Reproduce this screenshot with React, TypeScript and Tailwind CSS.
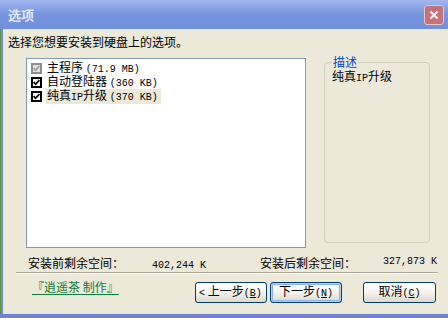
import React from "react";

const CJK = "[font-family:'Noto_Sans_CJK_SC',sans-serif]";

function M({ children }: { children: React.ReactNode }) {
  return <span className="[font-family:'Liberation_Mono',monospace] text-[10px] leading-[12px]">{children}</span>;
}

function Box({ gray }: { gray?: boolean }) {
  return (
    <span
      className={
        gray
          ? "flex h-[11px] w-[11px] items-center justify-center border-2 border-[#8e8e8e] bg-[#e4e4e4]"
          : "flex h-[11px] w-[11px] items-center justify-center border-2 border-black bg-white"
      }
    >
      <svg width="7" height="7" viewBox="0 0 7 7">
        <path d="M0.6 3.2 L2.6 5.3 L6.4 1.2" fill="none" stroke={gray ? "#9a9a9a" : "#000"} strokeWidth="1.7" />
      </svg>
    </span>
  );
}

function Row({ name, size, gray, sel }: { name: React.ReactNode; size: string; gray?: boolean; sel?: boolean }) {
  return (
    <div className="flex h-[14px] items-center">
      <Box gray={gray} />
      <span className={sel ? "ml-[4px] bg-[#ebe8d8] pr-[3px] pl-[1px] leading-[12px]" : "ml-[4px] pl-[1px] leading-[12px]"}>
        {name} <M>({size})</M>
      </span>
    </div>
  );
}

function Btn({ children, main, w }: { children: React.ReactNode; main?: boolean; w: string }) {
  return (
    <div
      className={`flex h-[21px] ${w} items-center justify-center rounded-[3px] border border-[#003c74] bg-gradient-to-b from-white via-[#f4f3ee] to-[#dcd9cc] text-[12px] leading-[12px] text-black ${
        main ? "shadow-[inset_0_0_0_1px_#b8d3f9,inset_0_0_0_2px_#8cb0ea]" : ""
      }`}
    >
      {children}
    </div>
  );
}

export default function App() {
  return (
    <div className={`h-[318px] w-[448px] overflow-hidden bg-[#ece9d8] text-[12px] text-black ${CJK}`}>
      {/* title bar */}
      <div className="flex h-[29px] items-center justify-between bg-gradient-to-b from-[#a2b7ee] via-[#7693de] to-[#7190dc] pl-[8px] pr-[4px]">
        <span className="text-[13px] font-bold leading-[13px] text-[#dfe7f8]">选项</span>
        <div className="flex h-[20px] w-[20px] items-center justify-center rounded-[3px] border border-[#e6c4c8] bg-[#c4737c]">
          <svg width="10" height="10" viewBox="0 0 10 10">
            <path d="M1.5 1.5 L8.5 8.5 M8.5 1.5 L1.5 8.5" stroke="#f4eeee" strokeWidth="2" />
          </svg>
        </div>
      </div>

      <div className="flex h-[285px]">
        <div className="w-px bg-[#5e9443]" />
        <div className="w-[2px] bg-[#7288d8]" />
        <div className="flex flex-1 flex-col">
          <div className="h-[25px] pl-[5px] pt-[7px] leading-[12px]">选择您想要安装到硬盘上的选项。</div>

          <div className="flex h-[194px]">
            <div className="ml-[23px] mt-[4px] h-[190px] w-[280px] border border-[#7f9db9] bg-white pl-[4px] pt-[2px]">
              <Row name="主程序" size="71.9 MB" gray />
              <Row name="自动登陆器" size="360 KB" />
              <Row
                name={
                  <>
                    纯真<M>IP</M>升级
                  </>
                }
                size="370 KB"
                sel
              />
            </div>
            <div className="relative ml-[18px] mt-[8px] h-[181px] w-[106px] rounded-[4px] border border-[#d0d0bf] pl-[7px] pt-[4px]">
              <span className="absolute left-[7px] top-[-7px] bg-[#ece9d8] px-[1px] leading-[12px] text-[#0046d5]">描述</span>
              <span className="leading-[12px]">
                纯真<M>IP</M>升级
              </span>
            </div>
          </div>

          <div className="flex h-[24px] leading-[12px]">
            <span className="ml-[25px] mt-[9px] w-[124px]">安装前剩余空间：</span>
            <span className="mt-[9px] w-[108px]">
              <M>402,244 K</M>
            </span>
            <span className="mt-[9px] w-[123px]">安装后剩余空间：</span>
            <span className="mt-[5px]">
              <M>327,873 K</M>
            </span>
          </div>

          <div className="ml-[13px] h-[2px] w-[422px] border-t border-b border-t-[#aca899] border-b-white" />

          <div className="flex h-[40px]">
            <div className="ml-[29px] mt-[4px] w-[163px]">
              <span className="leading-[12px] text-[#0a8040] underline underline-offset-[2px]">『逍遥茶 制作』</span>
            </div>
            <div className="mt-[8px] flex">
              <Btn w="w-[72px]">
                <span className="mr-auto pl-[3px]">
                  <M>&lt;</M> 上一步<M>(<u>B</u>)</M>
                </span>
              </Btn>
              <div className="w-[3px]" />
              <Btn w="w-[72px]" main>
                <span>
                  下一步<M>(<u>N</u>)</M>
                </span>
              </Btn>
              <div className="w-[21px]" />
              <Btn w="w-[73px]">
                <span>
                  取消<M>(<u>C</u>)</M>
                </span>
              </Btn>
            </div>
          </div>
        </div>
      </div>
      <div className="h-[4px] bg-[#6f82d6]" />
    </div>
  );
}
